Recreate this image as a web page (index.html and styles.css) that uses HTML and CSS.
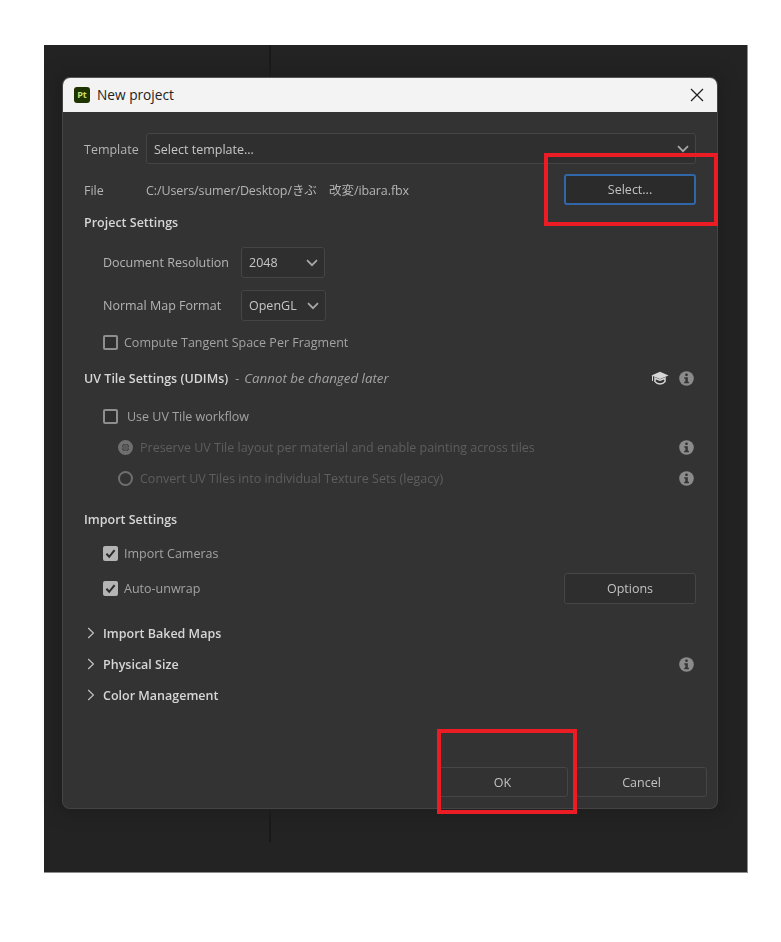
FILE: index.html
```html
<!DOCTYPE html>
<html lang="en">
<head>
<meta charset="utf-8">
<title>New project</title>
<link rel="stylesheet" href="styles.css">
</head>
<body>
<svg class="defs" width="0" height="0" aria-hidden="true">
  <symbol id="chev-down" viewBox="0 0 12 8"><path d="M1 1.2 6 6.2 11 1.2" fill="none" stroke="currentColor" stroke-width="1.7"/></symbol>
  <symbol id="chev-right" viewBox="0 0 8 12"><path d="M1.2 1 6.4 6 1.2 11" fill="none" stroke="currentColor" stroke-width="1.2"/></symbol>
  <symbol id="info" viewBox="0 0 15 15"><circle cx="7.5" cy="7.5" r="7.3" fill="#8b8b8b"/><rect x="6.2" y="2.6" width="2.6" height="2.4" rx="1" fill="#333"/><path d="M5.3 6.2h3.5v4.6h1.1v1.5H5.2v-1.5h1.2V7.7H5.3z" fill="#333"/></symbol>
  <symbol id="check" viewBox="0 0 15 15"><path d="M3.4 7.8 6.2 10.8 11.6 4.2" fill="none" stroke="#2b2b2b" stroke-width="2"/></symbol>
</svg>

<main class="stage">
  <span class="seam"></span>
  <section class="dialog">
    <header class="titlebar">
      <span class="logo">Pt</span>
      <span class="title">New project</span>
      <svg class="close" viewBox="0 0 14 14"><path d="M1 1 13 13M13 1 1 13" fill="none" stroke="#1c1c1c" stroke-width="1.2"/></svg>
    </header>

    <div class="content">
      <div class="row tall">
        <span class="label-short">Template</span>
        <div class="select wide"><span class="nudge">Select template...</span><svg class="chev"><use href="#chev-down"/></svg></div>
      </div>
      <div class="row tall mt-10">
        <span class="label-short">File</span>
        <span class="path">C:/Users/sumer/Desktop/きぶ　改変/ibara.fbx</span>
        <button class="btn btn-focus">Select...</button>
      </div>

      <h2 class="row heading mt-7">Project Settings</h2>
      <div class="row tall mt-15 indent">
        <span class="label-long">Document Resolution</span>
        <div class="select res"><span>2048</span><svg class="chev"><use href="#chev-down"/></svg></div>
      </div>
      <div class="row tall mt-12 indent">
        <span class="label-long">Normal Map Format</span>
        <div class="select fmt"><span>OpenGL</span><svg class="chev"><use href="#chev-down"/></svg></div>
      </div>
      <label class="row mt-11 indent"><span class="box"></span><span class="box-text">Compute Tangent Space Per Fragment</span></label>

      <div class="row mt-16">
        <h2 class="heading">UV Tile Settings (UDIMs)</h2>
        <span class="note"><span class="dash">-</span><em class="later">Cannot be changed later</em></span>
        <svg class="cap" viewBox="0 0 18 14"><path d="M9 .8 17.6 4.4 9 8 .4 4.4Z" fill="#d6d6d6"/><path d="M4 7.2v3.4c1.2 1.5 3 2.4 5 2.4s3.8-.9 5-2.4V7.2L9 9.3Z" fill="none" stroke="#d6d6d6" stroke-width="1.5"/><path d="M1.5 5v5" stroke="#d6d6d6" stroke-width="1"/></svg>
        <svg class="info"><use href="#info"/></svg>
      </div>
      <label class="row mt-18 indent"><span class="box"></span><span class="box-text spaced">Use UV Tile workflow</span></label>
      <div class="row mt-11 indent-2 dim">
        <span class="radio on"></span><span class="radio-text">Preserve UV Tile layout per material and enable painting across tiles</span>
        <svg class="info push"><use href="#info"/></svg>
      </div>
      <div class="row mt-11 indent-2 dim">
        <span class="radio"></span><span class="radio-text">Convert UV Tiles into individual Texture Sets (legacy)</span>
        <svg class="info push"><use href="#info"/></svg>
      </div>

      <h2 class="row heading mt-21">Import Settings</h2>
      <label class="row mt-14 indent"><span class="box checked"><svg class="tick"><use href="#check"/></svg></span><span class="box-text">Import Cameras</span></label>
      <div class="row tall mt-10 indent">
        <label class="inline"><span class="box checked"><svg class="tick"><use href="#check"/></svg></span><span class="box-text">Auto-unwrap</span></label>
        <button class="btn btn-push">Options</button>
      </div>

      <div class="row mt-19 group"><svg class="arrow"><use href="#chev-right"/></svg><h2 class="heading">Import Baked Maps</h2></div>
      <div class="row mt-11 group"><svg class="arrow"><use href="#chev-right"/></svg><h2 class="heading">Physical Size</h2><svg class="info push"><use href="#info"/></svg></div>
      <div class="row mt-11 group"><svg class="arrow"><use href="#chev-right"/></svg><h2 class="heading">Color Management</h2></div>
    </div>

    <footer class="actions">
      <button class="btn action">OK</button>
      <button class="btn action">Cancel</button>
    </footer>
  </section>
  <span class="mark mark-select"></span>
  <span class="mark mark-ok"></span>
</main>
</body>
</html>
```

FILE: styles.css
```css
* { box-sizing: border-box; }
html, body { margin: 0; padding: 0; background: #fff; }
h2 { margin: 0; }
body {
  font-family: "Open Sans", "Noto Sans CJK JP", sans-serif;
  font-size: 12.5px;
  color: #b4b4b4;
  height: 942px;
  overflow: hidden;
}
.defs { position: absolute; }

.stage {
  position: relative;
  width: 704px;
  height: 828px;
  margin: 45px 0 0 44px;
  padding: 32px 0 0 18px;
  background: #232323;
  border-right: 1px solid #8d8d8d;
  border-bottom: 1px solid #8d8d8d;
}
.seam {
  position: absolute;
  left: 225px;
  top: 0;
  bottom: 30px;
  width: 2px;
  background: #191919;
}
.dialog {
  position: relative;
  width: 656px;
  height: 732px;
  background: #333;
  border: 1px solid #444;
  border-top-color: #555;
  border-radius: 8px;
  box-shadow: 0 0 14px 6px #1f1f1f;
  overflow: hidden;
  filter: blur(0.35px);
}
.titlebar {
  display: flex;
  align-items: center;
  height: 34px;
  padding: 0 13px 1px 11px;
  background: #f3f3f3;
  color: #222;
  font-size: 13.7px;
}
.logo {
  width: 16px;
  height: 16px;
  margin-right: 7px;
  border-radius: 3px;
  background: #1f3300;
  color: #c6e06a;
  font-size: 9px;
  font-weight: 700;
  line-height: 16px;
  text-align: center;
}
.close { width: 14px; height: 14px; margin-left: auto; }

.content { padding: 21px 21px 0 21px; }
.row { display: flex; align-items: center; height: 20px; }
.row.tall { height: 31px; }
.mt-7 { margin-top: 7px; }
.mt-10 { margin-top: 10px; }
.mt-11 { margin-top: 11px; }
.mt-12 { margin-top: 12px; }
.mt-14 { margin-top: 14px; }
.mt-15 { margin-top: 15px; }
.mt-16 { margin-top: 16px; }
.mt-18 { margin-top: 18px; }
.mt-19 { margin-top: 19px; }
.mt-21 { margin-top: 21px; }
.indent { padding-left: 19px; }
.indent-2 { padding-left: 34px; }
.group { padding-left: 3px; }

.label-short { width: 62px; flex: none; padding-top: 1px; }
.label-long { width: 138px; flex: none; }
.path { flex: 1; letter-spacing: -0.1px; }
.heading { font-size: 12.5px; font-weight: 600; color: #d6d6d6; }

.select {
  display: flex;
  align-items: center;
  justify-content: space-between;
  height: 31px;
  padding: 0 6px 0 7px;
  background: #2f2f2f;
  border: 1px solid #454545;
  border-radius: 3px;
  color: #c6c6c6;
}
.nudge { padding-top: 1px; }
.select.wide { flex: 1; }
.select.res { width: 84px; }
.select.fmt { width: 85px; }
.chev { width: 12px; height: 8px; color: #a8a8a8; }

.btn {
  display: block;
  height: 31px;
  padding: 0;
  background: #2e2e2e;
  border: 1px solid #464646;
  border-radius: 3px;
  color: #c2c2c2;
  font: inherit;
  text-align: center;
}
.btn-focus { width: 132px; margin-left: auto; background: #2b2b2b; border: 2px solid #2f67a8; }
.btn-push { width: 132px; margin-left: auto; }

.inline { display: flex; align-items: center; }
.box {
  display: block;
  width: 15px;
  height: 15px;
  flex: none;
  margin-right: 6px;
  background: #2e2e2e;
  border: 2px solid #8e8e8e;
  border-radius: 2px;
}
.box.checked { background: #b4b4b4; border: 0; }
.tick { display: block; width: 15px; height: 15px; }
.box-text { color: #a3a3a3; }
.box-text.spaced { margin-left: 3px; }

.note { margin-left: 7px; color: #a3a3a3; }
.dash { margin-right: 5px; }
.later { font-size: 13.3px; }
.cap { width: 18px; height: 14px; margin-left: auto; margin-right: 10px; }
.info { width: 15px; height: 15px; flex: none; margin-right: 2px; }
.info.push { margin-left: auto; }

.radio {
  width: 15px;
  height: 15px;
  flex: none;
  margin-right: 7px;
  border: 2px solid #6f6f6f;
  border-radius: 50%;
}
.radio.on { background: radial-gradient(circle, #5a5a5a 0 3px, #333 3.5px 3.5px, #6f6f6f 4px); }
.radio-text { color: #5e5e5e; }

.arrow { width: 8px; height: 12px; margin-right: 8px; color: #c0c0c0; }

.actions {
  display: flex;
  justify-content: flex-end;
  gap: 8px;
  margin-top: 62px;
  padding-right: 10px;
}
.action { width: 131px; height: 30px; padding-top: 1px; background: #323232; }

.mark { position: absolute; border: 4px solid #ec1c24; }
.mark-select { left: 500px; top: 108px; width: 174px; height: 73px; }
.mark-ok { left: 393px; top: 684px; width: 140px; height: 85px; }
```
